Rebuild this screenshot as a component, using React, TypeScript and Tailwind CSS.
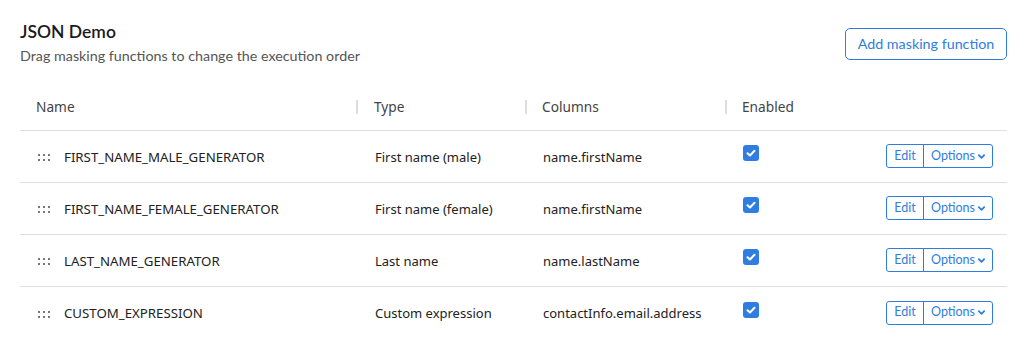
import React from "react";

const rows = [
  { name: "FIRST_NAME_MALE_GENERATOR", type: "First name (male)", col: "name.firstName" },
  { name: "FIRST_NAME_FEMALE_GENERATOR", type: "First name (female)", col: "name.firstName" },
  { name: "LAST_NAME_GENERATOR", type: "Last name", col: "name.lastName" },
  { name: "CUSTOM_EXPRESSION", type: "Custom expression", col: "contactInfo.email.address" },
];

function Handle() {
  return (
    <div className="grid grid-cols-3 gap-x-[3px] gap-y-[3px] w-[12px] mr-[14px] ml-[2px]">
      {[0, 1, 2, 3, 4, 5].map((i) => (
        <span key={i} className="block w-[2px] h-[2px] bg-[#777]" />
      ))}
    </div>
  );
}

function Check() {
  return (
    <div className="w-[16px] h-[16px] rounded-[3px] bg-[#2f7de1] flex items-center justify-center -mt-[7px]">
      <svg width="10" height="8" viewBox="0 0 10 8">
        <path d="M1.5 4.2 L4 6.5 L8.5 1.8" stroke="white" strokeWidth="2" fill="none" strokeLinecap="round" strokeLinejoin="round" />
      </svg>
    </div>
  );
}

export default function App() {
  const head = "font-['Noto_Sans',sans-serif] text-[13.7px] text-[#444]";
  const cell = "font-['Noto_Sans',sans-serif] text-[13px] text-[#222] mt-[2px]";
  const nameCell = "font-['Noto_Sans',sans-serif] text-[13.25px] text-[#222] mt-[2px]";
  return (
    <div className="w-[1027px] h-[348px] bg-white px-5 pt-5">
      <div className="flex items-start justify-between">
        <div>
          <div className="font-['Lato',sans-serif] text-[17.5px] leading-[24px] font-semibold text-[#1a1a1a]">JSON Demo</div>
          <div className="font-['Lato',sans-serif] text-[14.3px] leading-[22px] text-[#555] mt-[1px]">
            Drag masking functions to change the execution order
          </div>
        </div>
        <button className="mt-[8px] h-[32px] w-[162px] rounded-[5px] border border-[#2f7de1] text-[#2f7de1] font-['Lato',sans-serif] text-[14.3px] bg-white">
          Add masking function
        </button>
      </div>

      <div className="mt-[16px]">
        <div className="grid grid-cols-[338px_169px_200px_1fr] h-[48px] pt-[2px] items-center border-b border-[#e0e0e0]">
          <div className={`${head} pl-4`}>Name</div>
          <div className={`${head} flex items-center`}>
            <span className="w-[2px] h-[14px] bg-[#ddd] -ml-[2px] mr-[16px]" />Type
          </div>
          <div className={`${head} flex items-center`}>
            <span className="w-[2px] h-[14px] bg-[#ddd] -ml-[2px] mr-[15px]" />Columns
          </div>
          <div className={`${head} flex items-center`}>
            <span className="w-[2px] h-[14px] bg-[#ddd] -ml-[2px] mr-[15px]" />Enabled
          </div>
        </div>
        {rows.map((r, i) => (
          <div
            key={r.name}
            className={`grid grid-cols-[338px_169px_200px_1fr_auto] h-[52px] items-center ${i < rows.length - 1 ? "border-b border-[#e0e0e0]" : ""}`}
          >
            <div className={`${nameCell} pl-4 flex items-center`}>
              <Handle />
              {r.name}
            </div>
            <div className={`${cell} pl-[17px]`}>{r.type}</div>
            <div className={`${cell} pl-4`}>{r.col}</div>
            <div className="pl-4">
              <Check />
            </div>
            <div className="pr-[14px] flex">
              <div className="flex h-[24px] -mt-[1px] border border-[#2f7de1] rounded-[3px] font-['Lato',sans-serif] text-[12.5px] text-[#2f7de1]">
                <span className="w-[37px] flex items-center justify-center border-r border-[#2f7de1]">Edit</span>
                <span className="w-[68px] pl-[7px] flex items-center">
                  Options
                  <svg width="9" height="9" viewBox="0 0 10 10" className="ml-[2px]">
                    <path d="M2 3.5 L5 6.5 L8 3.5" stroke="#2f7de1" strokeWidth="2" fill="none" strokeLinecap="round" strokeLinejoin="round" />
                  </svg>
                </span>
              </div>
            </div>
          </div>
        ))}
      </div>
    </div>
  );
}
